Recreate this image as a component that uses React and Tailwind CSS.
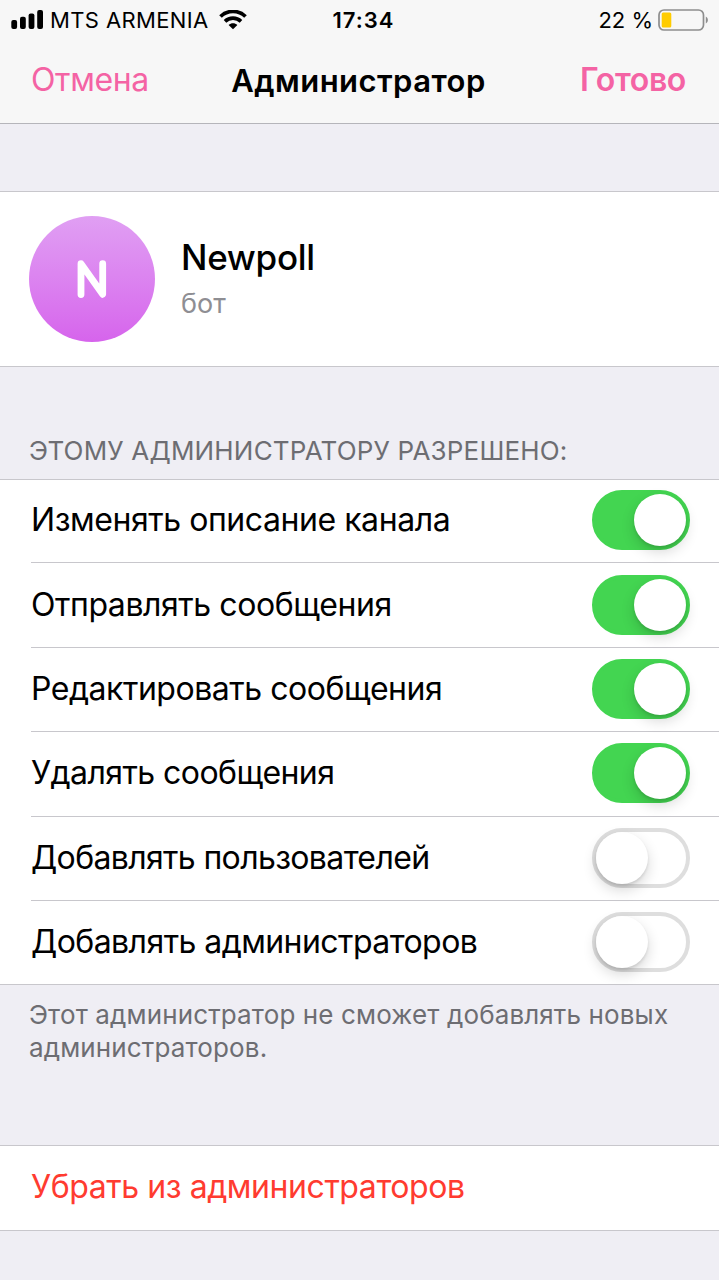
import React, { useState } from 'react';

const initialRights = [
  { id: 'info', label: 'Изменять описание канала', enabled: true, row: 'h-[83px] pb-[3px]', text: 'tracking-[-0.44px]' },
  { id: 'post', label: 'Отправлять сообщения', enabled: true, row: 'h-[85px] pb-px', text: 'tracking-[-0.43px]' },
  { id: 'edit', label: 'Редактировать сообщения', enabled: true, row: 'h-[84px] pb-px', text: 'tracking-[-0.47px]' },
  { id: 'delete', label: 'Удалять сообщения', enabled: true, row: 'h-[85px] pb-[2px]', text: 'tracking-[-0.56px]' },
  { id: 'invite', label: 'Добавлять пользователей', enabled: false, row: 'h-[84px] pb-px', text: 'tracking-[-0.64px]' },
  { id: 'promote', label: 'Добавлять администраторов', enabled: false, row: 'h-[83px] pb-px', text: 'tracking-[-0.56px]' },
];

function SignalIcon() {
  return (
    <svg width="33" height="20" viewBox="0 0 33 20" className="block">
      <rect x="0.3" y="10" width="5.800" height="9" rx="2" />
      <rect x="9" y="6.700" width="5.800" height="12.300" rx="2" />
      <rect x="17.6" y="3.400" width="5.800" height="15.600" rx="2" />
      <rect x="26.200" y="0" width="5.800" height="19" rx="2" />
    </svg>
  );
}

function WifiIcon() {
  return (
    <svg width="28" height="20" viewBox="0 0 28 20" className="block">
      <path d="M1.500 6.500C8.400-.3 19.600-.3 26.500 6.500" fill="none" stroke="black" strokeWidth="3.700" />
      <path d="M6 11.300c4.500-4.200 11.500-4.200 16 0" fill="none" stroke="black" strokeWidth="3.700" />
      <path d="M14 19.200l-4.400-4.300c2.600-2.100 6.200-2.100 8.800 0z" />
    </svg>
  );
}

function BatteryIcon() {
  return (
    <svg width="52" height="22" viewBox="0 0 52 22" className="block">
      <rect x="1" y="1" width="44.500" height="20" rx="5" fill="none" stroke="#8e8e8e" strokeWidth="1.7" />
      <rect x="3.700" y="3.500" width="9.600" height="15" rx="1.500" fill="#ffcc00" />
      <path d="M47.800 7.500c2.800 1.500 2.800 5.500 0 7z" fill="#8e8e8e" />
    </svg>
  );
}

function StatusBar() {
  return (
    <div className="grid grid-cols-[1fr_auto_1fr] items-center h-10 pl-[11px] pr-[9px] text-[22px] leading-none">
      <div className="flex items-center">
        <SignalIcon />
        <span className="ml-[6px] tracking-[0.38px]">MTS ARMENIA</span>
        <span className="ml-[10px]"><WifiIcon /></span>
      </div>
      <span className="font-semibold tracking-[1px] pl-[6px]">17:34</span>
      <div className="flex items-center justify-end">
        <span className="mr-[5px]">22 %</span>
        <BatteryIcon />
      </div>
    </div>
  );
}

function Toggle({ checked, onChange, label }) {
  return (
    <button
      role="switch"
      aria-checked={checked}
      aria-label={label}
      onClick={onChange}
      className={`flex items-center w-[98px] h-[60px] rounded-full border-4 shrink-0 ${
        checked ? 'bg-[#43d551] border-[#43d551] justify-end' : 'bg-white border-[#dedede] justify-start'
      }`}
    >
      <span className="w-[52px] h-[52px] rounded-full bg-white shadow-[0_6px_14px_rgba(0,0,0,0.16),0_2px_3px_rgba(0,0,0,0.1)]" />
    </button>
  );
}

function App() {
  const [rights, setRights] = useState(initialRights);

  const toggleRight = (id) => {
    setRights(rights.map(r => (r.id === id ? { ...r, enabled: !r.enabled } : r)));
  };

  return (
    <div className="w-full h-[1280px] overflow-hidden bg-[#efeef4] text-black font-['Inter',sans-serif]">
      {/* Navigation bar */}
      <header className="h-[124px] bg-[#f7f7f7] border-b border-[#b5b5ba]">
        <StatusBar />
        <div className="grid grid-cols-[1fr_auto_1fr] items-center h-[80px] pl-[31px] pr-[33px] text-[32px] leading-none">
          <button className="text-left tracking-[-0.35px] text-[#f463a4]">Отмена</button>
          <h1 className="text-[31px] font-semibold tracking-[0.45px]">Администратор</h1>
          <button className="text-right font-semibold tracking-[-0.35px] text-[#f463a4]">Готово</button>
        </div>
      </header>

      {/* Profile */}
      <section className="flex items-center mt-[67px] h-[176px] pl-[29px] bg-white border-y border-[#c8c7cc]">
        <div className="flex items-center justify-center w-[126px] h-[126px] rounded-full bg-linear-to-b from-[#e09ff3] to-[#d664ec]">
          <svg width="30" height="38" viewBox="0 0 30 38">
            <path d="M4 34.600V3.700L25.700 34.300V3.700" fill="none" stroke="white" strokeWidth="6.800" strokeLinecap="round" strokeLinejoin="round" />
          </svg>
        </div>
        <div className="ml-[26px] pt-[2px]">
          <h2 className="text-[35px] leading-[46px] font-medium tracking-[-0.3px]">Newpoll</h2>
          <p className="text-[27px] leading-[46px] pt-px text-[#8e8e93]">бот</p>
        </div>
      </section>

      {/* Rights */}
      <h3 className="mt-[66px] h-[46px] pl-[29px] pt-[2px] text-[26px] leading-[32px] tracking-[0.18px] text-[#6d6d72]">
        ЭТОМУ АДМИНИСТРАТОРУ РАЗРЕШЕНО:
      </h3>
      <section className="bg-white border-y border-[#c8c7cc] pl-[31px]">
        {rights.map((right) => (
          <div
            key={right.id}
            className={`flex items-center justify-between pr-[29px] border-b border-[#c8c7cc] last:border-b-0 ${right.row}`}
          >
            <span className={`text-[32px] leading-none ${right.text}`}>{right.label}</span>
            <Toggle checked={right.enabled} label={right.label} onChange={() => toggleRight(right.id)} />
          </div>
        ))}
      </section>
      <p className="h-[160px] pt-[13px] pl-[29px] text-[26px] leading-[33px] tracking-[0.13px] text-[#6d6d72]">
        Этот администратор не сможет добавлять новых<br />администраторов.
      </p>

      <button className="flex items-center w-full h-[86px] pl-[31px] pb-[2px] bg-white border-y border-[#c8c7cc] text-[32px] leading-none tracking-[-0.43px] text-[#ff3b30]">
        Убрать из администраторов
      </button>
    </div>
  );
}

export default App;
